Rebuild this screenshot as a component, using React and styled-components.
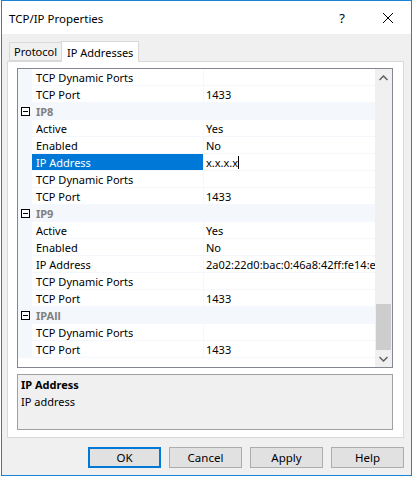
import React from "react";
import styled, { createGlobalStyle } from "styled-components";

const GlobalStyle = createGlobalStyle`
  html, body {
    margin: 0;
    padding: 0;
    background: #ffffff;
  }
  body {
    font-family: "Noto Sans", "Open Sans", sans-serif;
    font-size: 11px;
    color: #000;
  }
`;

const rows = [
  { name: "TCP Dynamic Ports", value: "" },
  { name: "TCP Port", value: "1433" },
  { category: "IP8" },
  { name: "Active", value: "Yes" },
  { name: "Enabled", value: "No" },
  { name: "IP Address", value: "x.x.x.x", selected: true },
  { name: "TCP Dynamic Ports", value: "" },
  { name: "TCP Port", value: "1433" },
  { category: "IP9" },
  { name: "Active", value: "Yes" },
  { name: "Enabled", value: "No" },
  { name: "IP Address", value: "2a02:22d0:bac:0:46a8:42ff:fe14:e6c1" },
  { name: "TCP Dynamic Ports", value: "" },
  { name: "TCP Port", value: "1433" },
  { category: "IPAll" },
  { name: "TCP Dynamic Ports", value: "" },
  { name: "TCP Port", value: "1433" },
];

const App = () => {
  return (
    <>
      <GlobalStyle />
      <Window>
        <TitleBar>
          <Title>TCP/IP Properties</Title>
          <TitleButton>?</TitleButton>
          <TitleButton>
            <svg width="12" height="12" viewBox="0 0 12 12">
              <path d="M1 1 L11 11 M11 1 L1 11" stroke="#000" strokeWidth="1" fill="none" />
            </svg>
          </TitleButton>
        </TitleBar>
        <Body>
          <TabStrip>
            <Tab>Protocol</Tab>
            <Tab $active>IP Addresses</Tab>
          </TabStrip>
          <TabPage>
            <Grid>
              <GridRows>
                {rows.map((row, i) =>
                  row.category ? (
                    <CategoryRow key={i}>
                      <Margin>
                        <Toggle />
                      </Margin>
                      <CategoryLabel>{row.category}</CategoryLabel>
                    </CategoryRow>
                  ) : (
                    <Row key={i}>
                      <Margin />
                      <NameCell $selected={row.selected}>{row.name}</NameCell>
                      <ValueCell>
                        {row.value}
                        {row.selected && <Caret />}
                      </ValueCell>
                    </Row>
                  )
                )}
              </GridRows>
              <ScrollBar>
                <ScrollArrow>
                  <svg width="9" height="6" viewBox="0 0 9 6">
                    <path d="M0.5 5 L4.5 1 L8.5 5" stroke="#606060" strokeWidth="1.5" fill="none" />
                  </svg>
                </ScrollArrow>
                <Track>
                  <Thumb />
                </Track>
                <ScrollArrow>
                  <svg width="9" height="6" viewBox="0 0 9 6">
                    <path d="M0.5 1 L4.5 5 L8.5 1" stroke="#606060" strokeWidth="1.5" fill="none" />
                  </svg>
                </ScrollArrow>
              </ScrollBar>
            </Grid>
            <Description>
              <DescTitle>IP Address</DescTitle>
              <DescText>IP address</DescText>
            </Description>
          </TabPage>
          <ButtonRow>
            <Button $default>OK</Button>
            <Button>Cancel</Button>
            <Button>Apply</Button>
            <Button>Help</Button>
          </ButtonRow>
        </Body>
      </Window>
    </>
  );
};

const Window = styled.div`
  box-sizing: border-box;
  width: 411px;
  height: 476px;
  margin-left: 1px;
  border: 1px solid #1883d7;
  background: #f0f0f0;
  display: flex;
  flex-direction: column;
`;

const TitleBar = styled.div`
  height: 33px;
  background: #ffffff;
  display: flex;
  align-items: center;
  padding-left: 7px;
`;

const Title = styled.div`
  flex: 1;
  font-size: 11.5px;
  padding-top: 1px;
`;

const TitleButton = styled.div`
  width: 46px;
  height: 33px;
  display: flex;
  align-items: center;
  justify-content: center;
  font-size: 13px;
`;

const Body = styled.div`
  flex: 1;
  display: flex;
  flex-direction: column;
  padding: 7px 7px 0 5px;
`;

const TabStrip = styled.div`
  display: flex;
  align-items: flex-end;
  height: 20px;
  padding-left: 2px;
  position: relative;
  z-index: 1;
`;

const Tab = styled.div`
  box-sizing: border-box;
  height: ${(p) => (p.$active ? "21px" : "19px")};
  margin-bottom: ${(p) => (p.$active ? "-1px" : "0")};
  margin-left: ${(p) => (p.$active ? "-1px" : "0")};
  padding: ${(p) => (p.$active ? "0 5px" : "0 4px")};
  display: flex;
  align-items: center;
  background: ${(p) => (p.$active ? "#ffffff" : "#f0f0f0")};
  border: 1px solid #d9d9d9;
  border-bottom: ${(p) => (p.$active ? "none" : "1px solid #d9d9d9")};
  font-size: 11px;
`;

const TabPage = styled.div`
  box-sizing: border-box;
  height: 377px;
  background: #ffffff;
  border: 1px solid #d9d9d9;
  padding: 6px 10px 7px 9px;
  display: flex;
  flex-direction: column;
`;

const Grid = styled.div`
  box-sizing: border-box;
  height: 300px;
  border: 1px solid #828790;
  display: flex;
  background: #ffffff;
`;

const GridRows = styled.div`
  flex: 1;
  display: flex;
  flex-direction: column;
  overflow: hidden;
`;

const Row = styled.div`
  box-sizing: border-box;
  height: 17px;
  display: flex;
  border-bottom: 1px solid #f4f7fc;
  flex-shrink: 0;
`;

const CategoryRow = styled(Row)`
  background: #f4f7fc;
`;

const Margin = styled.div`
  width: 14px;
  flex-shrink: 0;
  background: #f4f7fc;
  display: flex;
  align-items: center;
  justify-content: center;
`;

const Toggle = styled.div`
  box-sizing: border-box;
  width: 9px;
  height: 9px;
  border: 1px solid #000;
  background: #fff;
  position: relative;
  &::after {
    content: "";
    position: absolute;
    left: 1px;
    right: 1px;
    top: 3px;
    height: 1px;
    background: #000;
  }
`;

const CategoryLabel = styled.div`
  padding-left: 4px;
  font-weight: bold;
  color: #808080;
  display: flex;
  align-items: center;
`;

const NameCell = styled.div`
  box-sizing: border-box;
  width: 172px;
  flex-shrink: 0;
  padding-left: 4px;
  display: flex;
  align-items: center;
  white-space: nowrap;
  overflow: hidden;
  border-right: 1px solid #f4f7fc;
  background: ${(p) => (p.$selected ? "#0078d7" : "#ffffff")};
  color: ${(p) => (p.$selected ? "#ffffff" : "#000000")};
`;

const ValueCell = styled.div`
  flex: 1;
  padding-left: 2px;
  display: flex;
  align-items: center;
  white-space: nowrap;
  overflow: hidden;
`;

const Caret = styled.span`
  display: inline-block;
  width: 1px;
  height: 13px;
  background: #000;
`;

const ScrollBar = styled.div`
  width: 17px;
  flex-shrink: 0;
  background: #f0f0f0;
  display: flex;
  flex-direction: column;
`;

const ScrollArrow = styled.div`
  height: 17px;
  display: flex;
  align-items: center;
  justify-content: center;
`;

const Track = styled.div`
  flex: 1;
  display: flex;
  flex-direction: column;
  justify-content: flex-end;
  padding: 0 1px;
`;

const Thumb = styled.div`
  height: 46px;
  background: #cdcdcd;
`;

const Description = styled.div`
  box-sizing: border-box;
  margin-top: 6px;
  height: 56px;
  border: 1px solid #a0a0a0;
  background: #f0f0f0;
  padding: 1px 3px;
`;

const DescTitle = styled.div`
  font-weight: bold;
  line-height: 17px;
`;

const DescText = styled.div`
  line-height: 17px;
`;

const ButtonRow = styled.div`
  display: flex;
  justify-content: flex-end;
  gap: 8px;
  padding-top: 9px;
`;

const Button = styled.div`
  box-sizing: border-box;
  width: 73px;
  height: 21px;
  display: flex;
  align-items: center;
  justify-content: center;
  background: #e1e1e1;
  border: ${(p) => (p.$default ? "2px solid #0078d7" : "1px solid #adadad")};
  font-size: 11.5px;
`;

export default App;
